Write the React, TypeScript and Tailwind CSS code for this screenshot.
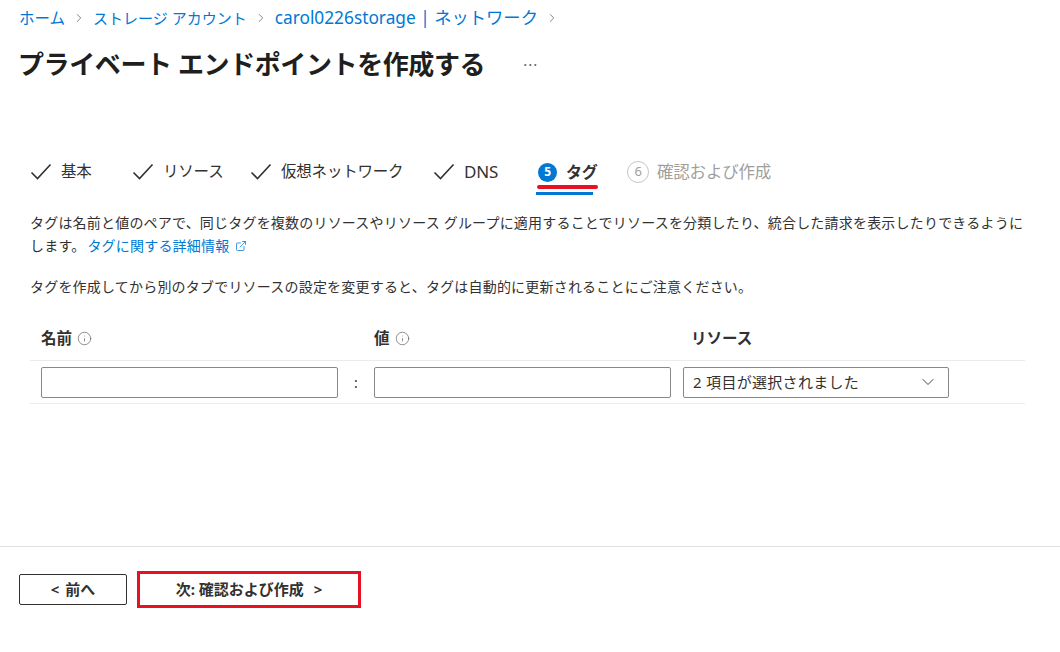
import { Info, ChevronDown, ChevronRight, ExternalLink } from 'lucide-react';

const font = { fontFamily: '"Noto Sans", "Noto Sans CJK JP", sans-serif' };

const CheckMark = () => (
  <svg width="22" height="18" viewBox="0 0 22 18" fill="none" className="text-[#323130] shrink-0">
    <path d="M1.5 9.5 L7.5 15.5 L20.5 1.5" stroke="currentColor" strokeWidth="1.6" />
  </svg>
);

// completed steps, with the width each one takes in the step bar
const doneTabs = [
  { label: '基本', w: 'w-[102px]' },
  { label: 'リソース', w: 'w-[118px]' },
  { label: '仮想ネットワーク', w: 'w-[183px]' },
  { label: 'DNS', w: 'w-[105px]' },
];

const Sep = () => <ChevronRight size={14} strokeWidth={1.3} className="text-[#605e5c]" />;

const App = () => {
  return (
    <div className="w-[1060px] h-[652px] bg-white text-[#323130] overflow-hidden" style={font}>
      <div className="h-[546px] flex flex-col">
        {/* Breadcrumb */}
        <div className="px-[19px] pt-[6px] flex items-center gap-[7px] text-[15px] leading-[24px] text-[#0078d4]">
          <span className="text-[15.5px]">ホーム</span>
          <Sep />
          <span>ストレージ アカウント</span>
          <Sep />
          <span className="text-[17.3px]">carol0226storage | ネットワーク</span>
          <Sep />
        </div>

        {/* Title */}
        <div className="px-[18px] mt-[14px] flex items-center">
          <h1 className="text-[26px] leading-[40px] font-bold tracking-[-0.4px] text-[#201f1e]">
            プライベート エンドポイントを作成する
          </h1>
          <span className="ml-[38px] text-[15px] text-[#605e5c] tracking-[1px]">···</span>
        </div>

        <div className="px-[30px]">
          {/* Tabs */}
          <div className="mt-[73px] flex items-start text-[15.5px] tracking-[-0.2px]">
            {doneTabs.map((t) => (
              <div key={t.label} className={`${t.w} flex items-center gap-[9px] h-[30px]`}>
                <CheckMark />
                <span className={t.label === 'DNS' ? 'text-[17px]' : ''}>{t.label}</span>
              </div>
            ))}
            <div className="relative flex items-center gap-[9px] h-[30px] w-[89px]">
              <span className="w-[19px] h-[19px] rounded-full bg-[#0078d4] text-white text-[12px] font-bold flex items-center justify-center">
                5
              </span>
              <span className="font-bold text-[16px]">タグ</span>
              <div className="absolute left-[-1px] w-[61px] top-[28px] h-[4px] rounded-full bg-[#e81123]" />
              <div className="absolute left-[-2px] w-[57px] top-[35px] h-[3px] bg-[#0078d4]" />
            </div>
            <div className="flex items-center gap-[8px] h-[30px] text-[#a19f9d]">
              <span className="w-[22px] h-[22px] rounded-full border border-[#c8c6c4] text-[13px] flex items-center justify-center">
                6
              </span>
              <span className="text-[16.5px]">確認および作成</span>
            </div>
          </div>

          {/* Description */}
          <p className="mt-[24px] text-[14px] leading-[23px] tracking-[0.2px]">
            タグは名前と値のペアで、同じタグを複数のリソースやリソース グループに適用することでリソースを分類したり、統合した請求を表示したりできるように
            <br />
            します。
            <span className="text-[#0078d4] inline-flex items-center gap-[6px] ml-[2px]">
              タグに関する詳細情報
              <ExternalLink size={12} strokeWidth={1.5} />
            </span>
          </p>
          <p className="mt-[18px] text-[14px] leading-[23px] tracking-[0.2px]">
            タグを作成してから別のタブでリソースの設定を変更すると、タグは自動的に更新されることにご注意ください。
          </p>

          {/* Table */}
          <div className="mt-[19px] w-[995px]">
            <div className="flex items-center h-[44px] border-b border-[#edebe9] text-[15.5px] font-bold">
              <div className="w-[333px] pl-[11px] flex items-center gap-[5px]">
                名前 <Info size={15} strokeWidth={1.1} className="text-[#605e5c]" />
              </div>
              <div className="w-[317px] pl-[11px] flex items-center gap-[5px]">
                値 <Info size={15} strokeWidth={1.1} className="text-[#605e5c]" />
              </div>
              <div className="pl-[11px]">リソース</div>
            </div>
            <div className="flex items-center h-[43px] border-b border-[#edebe9]">
              <div className="ml-[11px] w-[297px] h-[31px] border border-[#8a8886] rounded-[2px]" />
              <span className="w-[36px] text-center text-[14px]">:</span>
              <div className="w-[297px] h-[31px] border border-[#8a8886] rounded-[2px]" />
              <div className="ml-[12px] w-[266px] h-[31px] border border-[#8a8886] rounded-[2px] flex items-center justify-between pl-[9px] pr-[10px] text-[15px] tracking-[0.3px]">
                <span>2 項目が選択されました</span>
                <ChevronDown size={20} strokeWidth={1.1} className="text-[#323130]" />
              </div>
            </div>
          </div>
        </div>
      </div>

      {/* Footer */}
      <div className="border-t border-[#e1dfdd] px-[19px] pt-[24px] flex items-center gap-[10px]">
        <button className="w-[108px] h-[31px] border border-[#323130] rounded-[2px] text-[15px] font-bold flex items-center justify-center gap-[6px]">
          <span>&lt;</span>
          <span>前へ</span>
        </button>
        <button className="w-[224px] h-[37px] border-[3px] border-[#e81123] text-[15px] font-bold flex items-center justify-center gap-[10px]">
          <span>次: 確認および作成</span>
          <span>&gt;</span>
        </button>
      </div>
    </div>
  );
};

export default App;
